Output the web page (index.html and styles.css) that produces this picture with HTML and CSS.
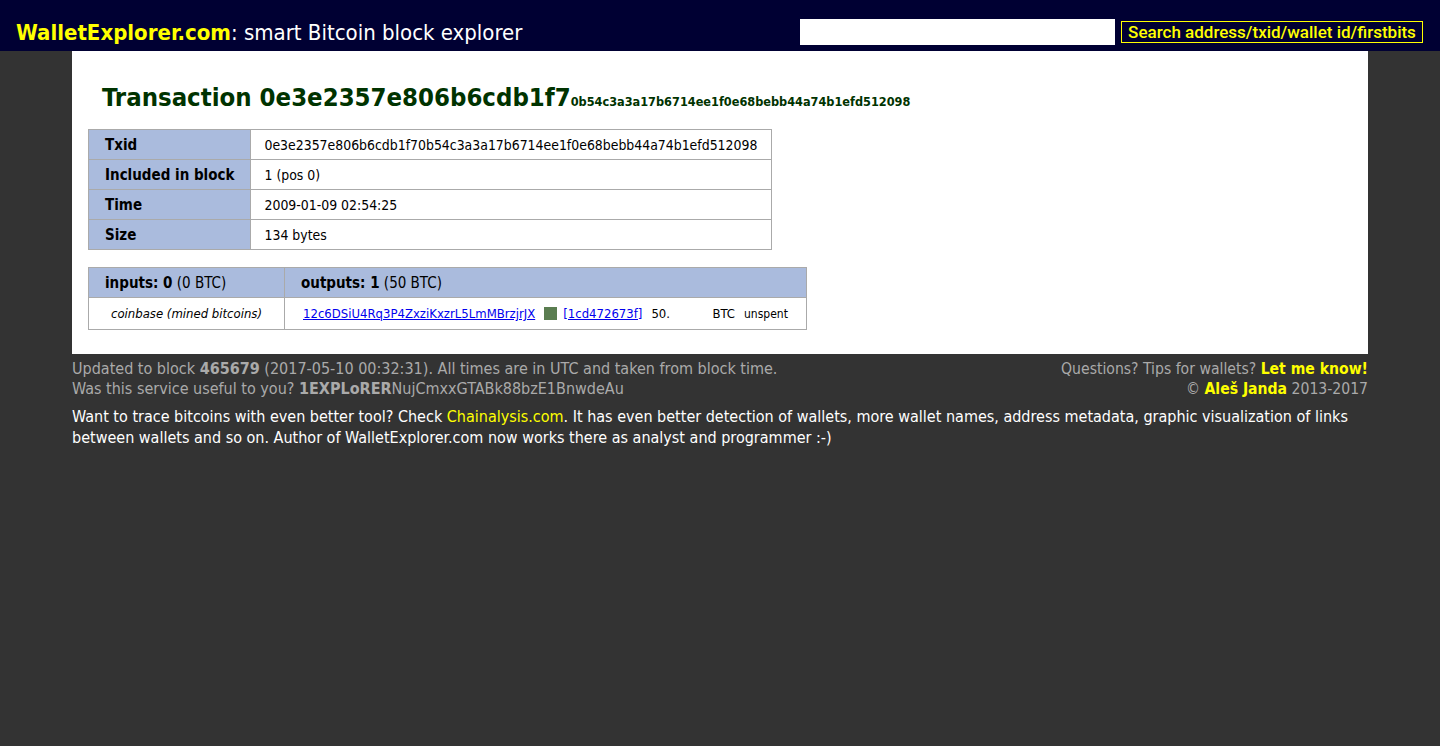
FILE: index.html
```html
<!DOCTYPE html>
<html lang="en">
<head>
<meta charset="utf-8">
<title>WalletExplorer.com: smart Bitcoin block explorer</title>
<link rel="stylesheet" href="styles.css">
</head>
<body>
<header class="topbar">
  <h1 class="site-title"><a class="brand" href="#">WalletExplorer.com</a>: smart Bitcoin block explorer</h1>
  <form class="search">
    <input class="search-input" type="text" name="q">
    <button class="search-btn" type="button">Search address/txid/wallet id/firstbits</button>
  </form>
</header>
<main class="panel">
  <h2 class="tx-title">Transaction 0e3e2357e806b6cdb1f7<small class="tx-rest">0b54c3a3a17b6714ee1f0e68bebb44a74b1efd512098</small></h2>
  <table class="info">
    <tr><th>Txid</th><td>0e3e2357e806b6cdb1f70b54c3a3a17b6714ee1f0e68bebb44a74b1efd512098</td></tr>
    <tr><th>Included in block</th><td>1 (pos 0)</td></tr>
    <tr><th>Time</th><td>2009-01-09 02:54:25</td></tr>
    <tr><th>Size</th><td>134 bytes</td></tr>
  </table>
  <table class="io">
    <tr>
      <th class="io-in"><b>inputs: 0</b> (0 BTC)</th>
      <th class="io-out"><b>outputs: 1</b> (50 BTC)</th>
    </tr>
    <tr>
      <td class="coinbase"><em>coinbase (mined bitcoins)</em></td>
      <td class="outs">
        <div class="out-row">
          <a class="addr" href="#">12c6DSiU4Rq3P4ZxziKxzrL5LmMBrzjrJX</a>
          <span class="wallet-box"></span>
          <a class="wallet" href="#">[1cd472673f]</a>
          <span class="amount">50.</span>
          <span class="unit">BTC</span>
          <span class="status">unspent</span>
        </div>
      </td>
    </tr>
  </table>
</main>
<footer class="foot">
  <div class="foot-top">
    <div class="foot-left">
      <p>Updated to block <b>465679</b> (2017-05-10 00:32:31). All times are in UTC and taken from block time.</p>
      <p>Was this service useful to you? <b>1EXPLoRER</b>NujCmxxGTABk88bzE1BnwdeAu</p>
    </div>
    <div class="foot-right">
      <p>Questions? Tips for wallets? <a class="ylink" href="#">Let me know!</a></p>
      <p>© <a class="ylink" href="#">Aleš Janda</a> 2013-2017</p>
    </div>
  </div>
  <p class="promo">Want to trace bitcoins with even better tool? Check <a class="ylink-n" href="#">Chainalysis.com</a>. It has even better detection of wallets, more wallet names, address metadata, graphic visualization of links between wallets and so on. Author of WalletExplorer.com now works there as analyst and programmer :-)</p>
</footer>
</body>
</html>
```
FILE: styles.css
```css
* { box-sizing: border-box; }
body {
  margin: 0;
  background: #333333;
  font-family: "DejaVu Sans Condensed", "DejaVu Sans", sans-serif;
  font-stretch: condensed;
  font-size: 15px;
  color: #000;
}
.topbar {
  background: #000033;
  height: 51px;
  display: flex;
  align-items: center;
  justify-content: space-between;
  padding: 13px 17px 0 16px;
}
.site-title {
  margin: 0;
  font-size: 22px;
  font-weight: normal;
  color: #fff;
  white-space: nowrap;
}
.brand {
  color: #ffff00;
  font-weight: bold;
  text-decoration: none;
}
.search {
  display: flex;
  align-items: center;
  margin: 0;
}
.search-input {
  width: 315px;
  height: 26px;
  border: 0;
  margin: 0 6px 0 0;
  padding: 0 4px;
  background: #fff;
}
.search-btn {
  height: 22px;
  width: 302px;
  background: #000033;
  color: #ffff00;
  border: 1px solid #ffff00;
  font-family: Roboto, "Liberation Sans", sans-serif;
  font-size: 17px;
  font-weight: 500;
  padding: 0;
  line-height: 20px;
}
.panel {
  margin: 0 72px;
  background: #fff;
  padding: 22px 16px 24px;
}
.tx-title {
  margin: 0 0 3px 14px;
  color: #003300;
  font-size: 25.5px;
  font-weight: bold;
  line-height: 48px;
}
.tx-rest {
  font-size: 12.6px;
  font-weight: bold;
}
table {
  border-collapse: collapse;
}
.info th, .info td, .io th, .io td {
  border: 1px solid #aaaaaa;
  height: 30px;
  text-align: left;
  white-space: nowrap;
}
.info th {
  background: #aabbdd;
  width: 162px;
  padding: 0 16px;
  font-weight: bold;
}
.info td {
  padding: 0 14px 0 13px;
  width: 520px;
  font-size: 13.9px;
}
.io {
  margin-top: 17px;
}
.io th {
  background: #aabbdd;
  font-weight: normal;
  padding: 0 16px;
}
.io-in { width: 196px; }
.io-out { width: 522px; }
.io td { height: 32px; font-size: 13px; }
.coinbase { text-align: center !important; }
.outs { padding: 0 18px; }
.out-row {
  display: flex;
  align-items: center;
}
.addr, .wallet { color: #0000ee; }
.wallet-box {
  display: inline-block;
  width: 13px;
  height: 13px;
  background: #5a7d50;
  margin: 0 6px 0 9px;
}
.amount { margin-left: 9px; width: 61px; }
.unit { margin-right: 9px; }
.status { font-size: 12px; }
.foot {
  margin: 0 72px;
  padding-top: 5px;
  color: #aaaaaa;
  font-size: 16px;
  line-height: 20px;
}
.foot p { margin: 0; }
.foot-top {
  display: flex;
  justify-content: space-between;
}
.foot-right { text-align: right; font-size: 15.6px; }
.ylink {
  color: #ffff00;
  font-weight: bold;
  text-decoration: none;
}
.ylink-n { color: #ffff00; text-decoration: none; }
.foot .promo {
  margin-top: 7px;
  color: #fff;
  line-height: 21px;
}
```
